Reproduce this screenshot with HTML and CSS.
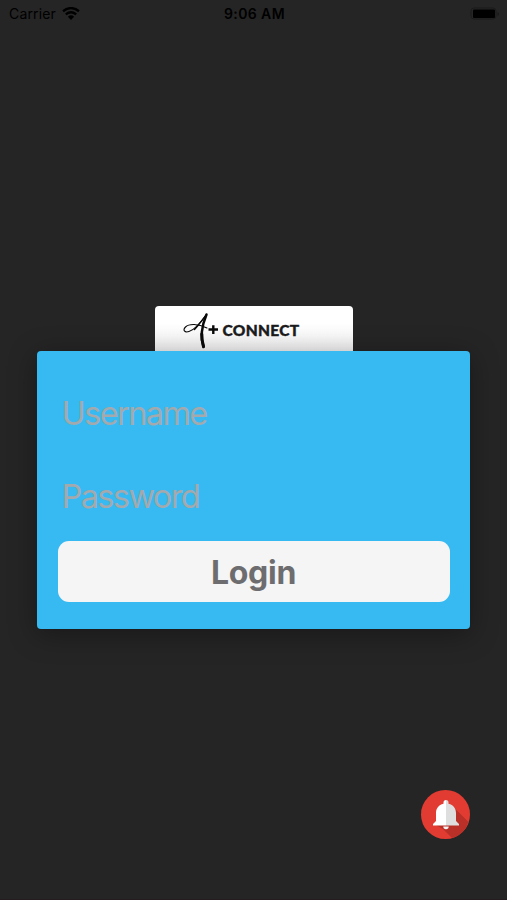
FILE: index.html
```
<!DOCTYPE html>
<html lang="en">

<head>
    <meta charset="UTF-8">
    <meta name="viewport" content="width=device-width, initial-scale=1.0">
    <title>A+ Connect</title>
    <link rel="stylesheet" href="styles.css">
</head>

<body>
    <header class="status-bar">
        <div class="carrier">
            <span>Carrier</span>
            <svg width="18" height="14" viewBox="0 0 18 14">
                <path d="M1 4.200Q9-2 17 4.200M3.800 7.300Q9 3 14.200 7.300" fill="none" stroke="#000" stroke-width="2.400"/>
                <path d="M5.900 9.700Q9 6.900 12.100 9.700L9 12.900Z"/>
            </svg>
        </div>
        <time class="time">9:06 AM</time>
        <svg class="battery" width="30" height="14" viewBox="0 0 30 14">
            <rect x="1" y="1" width="25" height="11" rx="3" fill="none" stroke="#1b1b1b"/>
            <rect x="3" y="2.500" width="22" height="8.500" rx="1"/>
            <path d="M27.500 5v4q1.500-.6 1.500-2t-1.500-2Z" fill="#1b1b1b"/>
        </svg>
    </header>

    <main>
        <div class="logo">
            <svg width="38" height="40" viewBox="0 0 38 40">
                <g fill="none" stroke="#080808" stroke-linecap="round" stroke-linejoin="round">
                    <path d="M23 5C18 12 12 20 6 21.500C1.500 23 -.5 20 2.500 17C6 13.500 15 13.500 24 18" stroke-width="1.100"/>
                    <path d="M23 5.500C19 10 16 15 11.500 19.500" stroke-width="1.400"/>
                    <path d="M23.500 4.500C19.500 14 16.500 25 20.500 37" stroke-width="2.500"/>
                    <path d="M18.700 24Q18.700 30 20.500 36.500" stroke-width="3"/>
                    <path d="M25.500 19.500H35M30.300 15.300V24" stroke-width="2.400" stroke-linecap="butt"/>
                </g>
            </svg>
            <span>CONNECT</span>
        </div>

        <form class="login">
            <input type="text" placeholder="Username" aria-label="Username">
            <input type="password" placeholder="Password" aria-label="Password">
            <button type="button">Login</button>
        </form>
    </main>

    <button class="alert" type="button" aria-label="Notifications">
        <svg width="49" height="49" viewBox="0 0 49 49">
            <circle cx="24.500" cy="24.500" r="24.500" fill="#e23c32"/>
            <path d="M32.500 17L47.500 32A24.500 24.500 0 0 1 31 48.100L22 39L13 34Z" fill="#b93028"/>
            <path d="M25 10a2.500 2.500 0 0 0-2.500 2.500v1.200c-5 1.200-7.500 4.800-7.500 9.300v8L12 34v1.500h13Z" fill="#fff"/>
            <path d="M25 10a2.500 2.500 0 0 1 2.500 2.500v1.200c5 1.200 7.500 4.800 7.500 9.300v8L38 34v1.500H25Z" fill="#dedede"/>
            <path d="M22.300 36.500h5.400a2.700 2.700 0 0 1-5.400 0Z" fill="#f2f2f2"/>
        </svg>
    </button>
</body>

</html>
```

FILE: styles.css
```
* {
    box-sizing: border-box;
}

body {
    margin: 0;
    height: 100vh;
    display: flex;
    flex-direction: column;
    background-color: #252525;
    border-bottom: 1px solid #251c21;
    font-family: Inter, "Liberation Sans", sans-serif;
}

.status-bar {
    display: grid;
    grid-template-columns: 1fr auto 1fr;
    align-items: center;
    height: 27px;
    padding: 0 7px 0 9px;
    font-size: 14px;
    color: #000;
}

.carrier {
    display: flex;
    align-items: center;
    gap: 6px;
    letter-spacing: 0.15px;
}

.time {
    font-weight: 600;
    letter-spacing: 0.4px;
}

.battery {
    justify-self: end;
}

main {
    display: flex;
    flex-direction: column;
    align-items: center;
    padding-top: 279px;
}

.logo {
    display: flex;
    align-items: center;
    width: 198px;
    height: 45px;
    padding: 2px 0 0 28px;
    border-radius: 4px 4px 0 0;
    background: linear-gradient(#fff 40%, #f0f0f0);
    color: #1c1c1e;
    font-family: Lato, sans-serif;
    font-size: 15.5px;
    font-weight: 900;
    letter-spacing: 0.3px;
    -webkit-text-stroke: 0.4px #1c1c1e;
}

.logo span {
    margin-left: 2px;
}

.login {
    display: flex;
    flex-direction: column;
    width: 433px;
    height: 278px;
    padding: 20px 20.5px 0;
    border-radius: 4px;
    background-color: #37b9f1;
    box-shadow: 0 5px 28px rgba(0, 0, 0, 0.35);
}

.login input {
    height: 83px;
    padding: 2px 4px 0;
    border: 0;
    background: none;
    font: 400 32.5px Inter, sans-serif;
    letter-spacing: -1.6px;
}

.login input::placeholder {
    color: #a3a9ad;
}

.login button {
    height: 61px;
    margin-top: 4px;
    padding: 2px 0 0;
    border: 0;
    border-radius: 11px;
    background-color: #f5f5f5;
    color: #6d6d70;
    font: 700 32px Inter, sans-serif;
    letter-spacing: -0.3px;
}

.alert {
    width: 49px;
    height: 49px;
    margin: auto 37px 60px auto;
    padding: 0;
    border: 0;
    border-radius: 50%;
    background: none;
}

.alert svg {
    display: block;
}
```
